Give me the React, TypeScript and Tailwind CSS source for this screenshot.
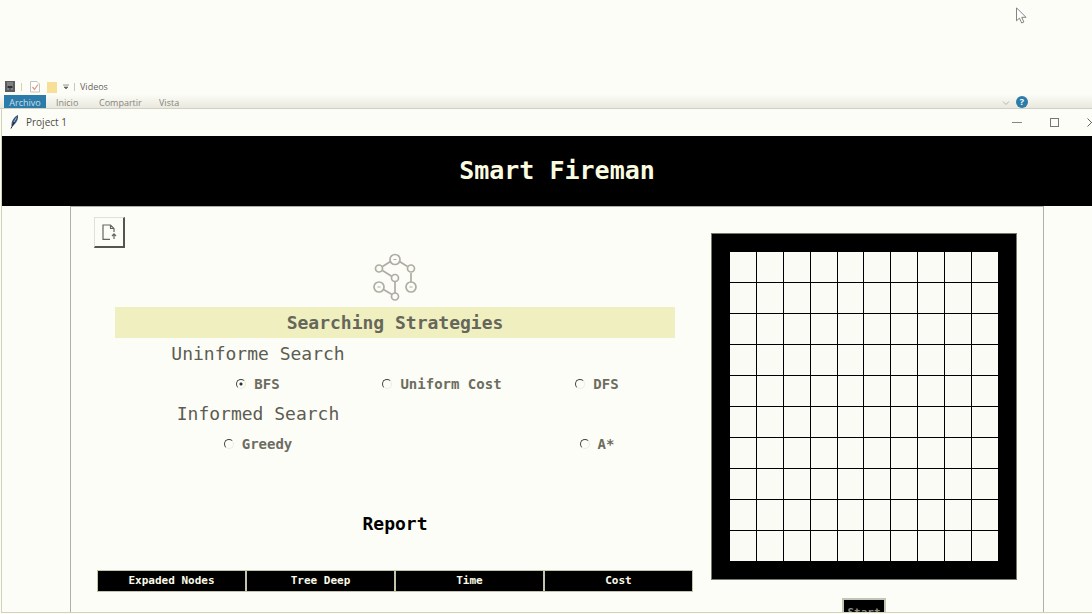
import React, { useState } from "react";

const cells = Array.from({ length: 100 }, (_, i) => i);
const columns = ["Expaded Nodes", "Tree Deep", "Time", "Cost"];

function FolderIcon() {
  return (
    <svg className="h-3 w-[10px]" viewBox="0 0 10 12" aria-hidden="true">
      <rect x="0" y="0" width="10" height="11" fill="#5c5d60" />
      <path d="M2 2h6M2 4h6M2 8h2M6 8h2" stroke="#a5a59e" strokeWidth="1" />
      <rect x="3" y="5" width="4" height="2" fill="#2f3035" />
    </svg>
  );
}

function CheckIcon() {
  return (
    <svg className="h-3 w-[10px]" viewBox="0 0 10 12" fill="none" aria-hidden="true">
      <path d="M.5.500h6.500l2.500 2.500V11h-9z" fill="#fff" stroke="#c3c3bb" />
      <path d="M2.500 6l2 2.500 3.500-5" stroke="#e29a80" strokeWidth="1.300" />
    </svg>
  );
}

function FeatherIcon() {
  return (
    <svg className="h-[14px] w-[9px]" viewBox="0 0 9 14" aria-hidden="true">
      <path d="M8 0C4 2 1 6 1.500 11L3 11C6 8 8.500 5 8 0z" fill="#3c5878" />
      <path d="M7 2L1 13.500" stroke="#1f2a3a" strokeWidth="1" />
      <path d="M6.500 2.500L4 7" stroke="#9fc0e0" strokeWidth="1" />
    </svg>
  );
}

function Pointer() {
  return (
    <svg className="absolute left-[1016px] top-[7px] h-[17px] w-[11px]" viewBox="0 0 11 17" aria-hidden="true">
      <path d="M.5.800v13l3-2.700 2.200 4.900 2.200-1-2.200-4.700h4.300z" fill="#fff" stroke="#77776f" strokeWidth=".9" />
    </svg>
  );
}

function GraphIcon() {
  return (
    <svg className="h-12 w-11" viewBox="0 0 44 48" fill="none" stroke="#adada2" strokeWidth="1.700" aria-hidden="true">
      <path d="M17.500 8.500L9.500 13.500M26.500 8.500l8 5M9.500 17.500l9.500 6M38 20v9M22 29v11M10.500 36.500l8.500 5" />
      <circle cx="22" cy="6.500" r="5" />
      <circle cx="6" cy="15.500" r="3.500" />
      <circle cx="38" cy="15.500" r="3.500" />
      <circle cx="22" cy="25" r="3.500" />
      <circle cx="6" cy="34" r="5" />
      <circle cx="38" cy="34" r="5" />
      <circle cx="22" cy="43.500" r="3.500" />
      <path d="M20.500 6.500h3M4.500 34h3M36.500 34h3" strokeWidth="1.200" />
    </svg>
  );
}

function Choice({ label, value, onPick }: { label: string; value: string; onPick: (v: string) => void }) {
  return (
    <label className="flex h-[30px] items-center gap-2 justify-self-center text-[14px] font-bold text-[#6c6c60]">
      <input
        type="radio"
        name="strategy"
        checked={value === label}
        onChange={() => onPick(label)}
        className="size-[10px] shrink-0 appearance-none rounded-full border border-b-[#ecece4] border-l-[#44443c] border-r-[#ecece4] border-t-[#44443c] checked:bg-[radial-gradient(circle,#33332c_1px,transparent_2px)]"
      />
      {label}
    </label>
  );
}

export default function App() {
  const [strategy, setStrategy] = useState("BFS");
  return (
    <div className="relative flex h-screen flex-col overflow-hidden bg-[#fdfdf8] pb-px font-['DejaVu_Sans_Mono',monospace]">
      <Pointer />
      <div className="shrink-0 pt-20 font-['Open_Sans',sans-serif] text-[9px] text-[#66665f]">
        <div className="flex h-[14px] items-center pl-[5px]">
          <FolderIcon />
          <span className="ml-[6px] h-2 border-l border-[#d6d6a0]" />
          <span className="ml-2"><CheckIcon /></span>
          <span className="ml-[7px] h-[11px] w-[10px] bg-[#f8df98]" />
          <svg className="ml-[6px] h-[6px] w-[6px]" viewBox="0 0 6 6" aria-hidden="true">
            <path d="M0 1h6M1 3h4L3 5z" fill="#66665f" stroke="#66665f" strokeWidth=".7" />
          </svg>
          <span className="ml-[5px] h-2 border-l border-[#c8c8c0]" />
          <span className="ml-[5px]">Videos</span>
        </div>
        <nav className="flex h-[15px] items-end overflow-hidden border-b border-[#d0d0c4] bg-linear-to-b from-[#fdfdf8] to-[#e8e8de] pl-1 leading-[14px] text-[#85857c]">
          <a href="#archivo" className="h-[13px] w-[42px] bg-[#2c7caa] pt-px text-center text-[#c8dde6]">Archivo</a>
          <a href="#inicio" className="ml-[10px] h-[13px] w-[43px] pt-px">Inicio</a>
          <a href="#compartir" className="h-[13px] w-[60px] pt-px">Compartir</a>
          <a href="#vista" className="h-[13px] pt-px">Vista</a>
          <svg className="ml-auto h-2 w-2" viewBox="0 0 8 8" fill="none" aria-hidden="true">
            <path d="M1 1.500l3 3 3-3" stroke="#b5b5ac" />
          </svg>
          <button aria-label="Help" className="ml-[6px] mr-16 size-3 rounded-full bg-[#2c7caa] text-center text-[9px] font-bold leading-3 text-white">?</button>
        </nav>
      </div>

      <section className="ml-px flex min-h-0 w-[calc(100%+19px)] flex-1 flex-col border-b border-l border-[#d2d2b8]">
        <div className="flex h-[27px] shrink-0 items-center bg-[#fdfdf8] pb-px pl-2 font-['Open_Sans',sans-serif] text-[10px] text-[#4c4c45]">
          <FeatherIcon />
          <span className="ml-[7px]">Project 1</span>
          <div className="ml-auto mr-[16px] flex items-center gap-[28px] text-[#66665f]">
            <button aria-label="Minimize" className="flex size-[10px] items-center"><span className="h-px w-full bg-[#88887f]" /></button>
            <button aria-label="Maximize" className="size-[9px] border border-[#77776f]" />
            <button aria-label="Close" className="size-[9px]">
              <svg viewBox="0 0 9 9" className="size-[9px]" stroke="#66665f"><path d="M.5.500l8 8M8.500.500l-8 8" /></svg>
            </button>
          </div>
        </div>
        <header className="flex h-[70px] shrink-0 items-center justify-center bg-black">
          <h1 className="text-[25px] font-bold text-[#fbfbe0]">Smart Fireman</h1>
        </header>

        <div className="flex min-h-0 flex-1 px-[68px]">
          <main className="flex min-w-0 flex-1 items-start gap-[18px] overflow-hidden border-x border-t border-[#b0b0a8] pl-[26px] pr-[26px]">
            <div className="flex min-w-0 flex-1 flex-col pt-[10px]">
              <button aria-label="Open file" className="-ml-[3px] flex h-[31px] w-[31px] items-center justify-center border-b-2 border-l border-r-2 border-t border-b-[#55554e] border-l-[#e0e0d8] border-r-[#55554e] border-t-[#e0e0d8]">
                <svg className="h-4 w-[15px]" viewBox="0 0 15 16" fill="none" stroke="#66665e" strokeWidth="1.200" aria-hidden="true">
                  <path d="M8 15.300H1V1h7.500l3.500 3.500V8M8.500 1v3.500H12M12 15v-5M10 12l2-2.200 2 2.200" />
                </svg>
              </button>
              <div className="mt-[5px] flex flex-col items-center">
                <GraphIcon />
              </div>
              <h2 className="mx-[18px] mt-[6px] h-[31px] bg-[#efefbf] text-center text-[18px] font-bold leading-[31px] text-[#66665a]">Searching Strategies</h2>
              <div className="mx-[18px] mt-px grid grid-cols-[214fr_154fr_156fr] pl-9">
                <h3 className="col-start-1 h-[30px] justify-self-center whitespace-nowrap text-[18px] leading-[30px] text-[#5c5c52]">Uninforme Search</h3>
                <div className="col-span-3 grid grid-cols-subgrid">
                  <Choice label="BFS" value={strategy} onPick={setStrategy} />
                  <Choice label="Uniform Cost" value={strategy} onPick={setStrategy} />
                  <Choice label="DFS" value={strategy} onPick={setStrategy} />
                </div>
                <h3 className="col-start-1 h-[30px] justify-self-center whitespace-nowrap text-[18px] leading-[30px] text-[#5c5c52]">Informed Search</h3>
                <div className="col-span-3 grid grid-cols-subgrid">
                  <Choice label="Greedy" value={strategy} onPick={setStrategy} />
                  <span />
                  <Choice label="A*" value={strategy} onPick={setStrategy} />
                </div>
              </div>
              <h2 className="mt-[50px] h-[30px] text-center text-[18px] font-bold leading-[30px] text-black">Report</h2>
              <table className="mt-[31px] w-full table-fixed border-separate border-spacing-0">
                <thead>
                  <tr>
                    {columns.map((c) => (
                      <th key={c} className="h-[22px] border border-[#c4c4ac] bg-black p-0 text-[11px] font-bold leading-5 text-[#fbfbe8]">{c}</th>
                    ))}
                  </tr>
                </thead>
              </table>
            </div>

            <aside className="flex w-[306px] shrink-0 flex-col items-center pt-[26px]">
              <div className="grid h-[347px] w-full grid-cols-10 grid-rows-10 gap-px border border-[#77776a] bg-black p-[18px]">
                {cells.map((c) => (
                  <div key={c} className="bg-[#fbfbf6]" />
                ))}
              </div>
              <button className="mt-[18px] h-[30px] w-11 border-2 border-[#c4c4b4] bg-black text-[11px] font-bold text-[#8c8c82]">Start</button>
            </aside>
          </main>
        </div>
      </section>
    </div>
  );
}
